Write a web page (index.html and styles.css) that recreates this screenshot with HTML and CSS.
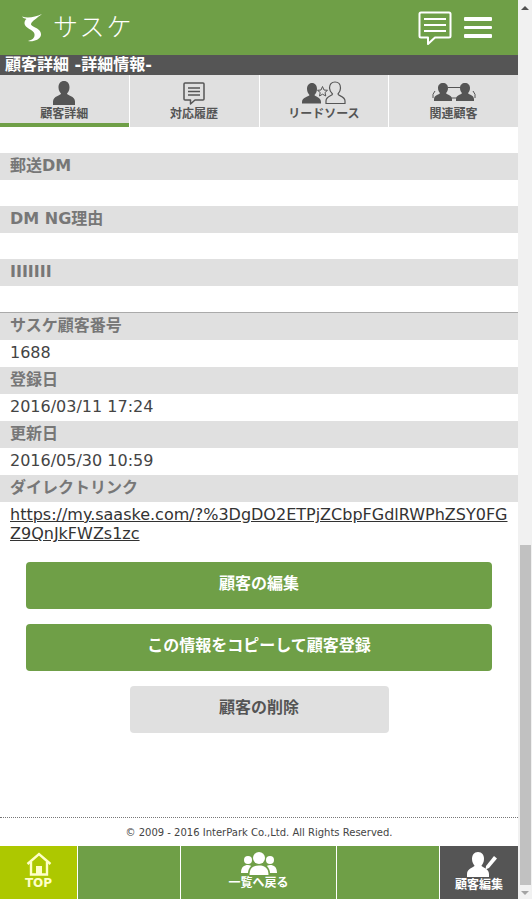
FILE: index.html
```html
<!DOCTYPE html>
<html lang="ja">
<head>
<meta charset="utf-8">
<title>サスケ</title>
<link rel="stylesheet" href="styles.css">
</head>
<body>
<div class="app">
  <div class="main">
    <header class="header">
      <div class="logo">
        <svg class="logo-mark" viewBox="0 0 22 30" width="22" height="30"><path fill="#fff" d="M1 3.5 C7 5.5 14 4 21 1 C16 5 11 8 10 11 C9.5 14 21 15 20 22 C19 27 12 29 7 28 C11 27 14 25 13.5 21 C13 17 3.500 15 3.500 10.500 C3.500 8.500 4 7 5.500 6 C4 5.500 2 5 1 3.500 Z"/></svg>
        <span class="logo-text">サスケ</span>
      </div>
      <div class="header-actions">
        <svg viewBox="0 0 34 36" width="34" height="36"><path fill="none" stroke="#fff" stroke-width="2" stroke-linejoin="round" d="M3 2.500 H31 Q32.500 2.500 32.500 4 V26 Q32.500 27.500 31 27.500 H17 L10 34 V27.500 H3 Q1.500 27.500 1.500 26 V4 Q1.500 2.500 3 2.500 Z"/><path stroke="#fff" stroke-width="2.200" d="M6 9 H28 M6 15 H28 M6 21 H28"/></svg>
        <div class="burger"><span></span><span></span><span></span></div>
      </div>
    </header>
    <h1 class="title">顧客詳細 -詳細情報-</h1>
    <nav class="tabs">
      <a class="tab tab-active">
        <svg viewBox="0 0 24 24" width="24" height="24"><use href="#person"/></svg>
        <span>顧客詳細</span>
      </a>
      <a class="tab">
        <svg viewBox="0 0 24 24" width="24" height="24"><path fill="none" stroke="#555" stroke-width="1.500" stroke-linejoin="round" d="M3 2 H21 Q22 2 22 3 V18 Q22 19 21 19 H13 L8.500 23 V19 H3 Q2 19 2 18 V3 Q2 2 3 2 Z"/><path stroke="#555" stroke-width="1.300" d="M6 7 H18 M6 10.500 H18 M6 14 H18"/></svg>
        <span>対応履歴</span>
      </a>
      <a class="tab">
        <svg viewBox="0 0 44 24" width="44" height="24"><g transform="translate(0 2)"><path fill="#555" d="M10 0 C13 0 15 2.500 15 6 C15 9 13.500 11 12.500 12 C12.500 13.500 19 14 19 19 V20.500 H0 V19 C0 14 7.500 13.500 7.500 12 C6.500 11 5 9 5 6 C5 2.500 7 0 10 0 Z"/></g><path fill="none" stroke="#555" stroke-width="1" d="M20.500 5.500 L22 9 L25.500 9.300 L23 11.500 L23.800 15 L20.500 13.200 L17.500 15 L18.200 11.500 L15.500 9.300 L19 9 Z"/><path fill="none" stroke="#555" stroke-width="1.200" d="M33 1 C36.500 1 38.500 3.500 38.500 7 C38.500 10 37 12 36 13 C36 15 43 15 43 20 V22.500 H24 V20 C24 15 30.500 15 30.500 13 C29.500 12 27.500 10 27.500 7 C27.500 3.500 29.500 1 33 1 Z"/></svg>
        <span>リードソース</span>
      </a>
      <a class="tab tab-last">
        <svg viewBox="0 0 44 24" width="44" height="24"><g fill="#555"><path d="M11 2 C14 2 16 4 16 7 C16 9.500 15 11 14 12 C14 13.500 20 14 20 18 V20 H2 V18 C2 14 8 13.500 8 12 C7 11 6 9.500 6 7 C6 4 8 2 11 2 Z"/><path d="M33 2 C36 2 38 4 38 7 C38 9.500 37 11 36 12 C36 13.500 42 14 42 18 V20 H24 V18 C24 14 30 13.500 30 12 C29 11 28 9.500 28 7 C28 4 30 2 33 2 Z"/></g><path fill="none" stroke="#555" stroke-width="1" d="M16 6.500 H28 M19 17 H25 M3 10 Q0 13 1 17 M41 10 Q44 13 43 17"/></svg>
        <span>関連顧客</span>
      </a>
    </nav>
    <main class="content">
      <dl class="fields">
        <dt class="label">郵送DM</dt><dd class="value value-empty"></dd>
        <dt class="label">DM NG理由</dt><dd class="value value-empty"></dd>
        <dt class="label">IIIIIII</dt><dd class="value value-empty"></dd>
      </dl>
      <dl class="fields fields-system">
        <dt class="label">サスケ顧客番号</dt><dd class="value">1688</dd>
        <dt class="label">登録日</dt><dd class="value">2016/03/11 17:24</dd>
        <dt class="label">更新日</dt><dd class="value">2016/05/30 10:59</dd>
        <dt class="label">ダイレクトリンク</dt>
        <dd class="value value-link"><a href="#">https://my.saaske.com/?%3DgDO2ETPjZCbpFGdlRWPhZSY0FGZ9QnJkFWZs1zc</a></dd>
      </dl>
      <div class="actions">
        <a class="btn btn-primary">顧客の編集</a>
        <a class="btn btn-primary">この情報をコピーして顧客登録</a>
        <a class="btn btn-muted">顧客の削除</a>
      </div>
    </main>
    <footer class="footer">
      <p class="copyright">© 2009 - 2016 InterPark Co.,Ltd. All Rights Reserved.</p>
      <nav class="bottom-nav">
        <a class="bn bn-top">
          <svg viewBox="0 0 26 24" width="26" height="24"><path fill="none" stroke="#ffffc8" stroke-width="2.400" d="M1.500 12 L13 2 L24.500 12"/><path fill="none" stroke="#ffffc8" stroke-width="2.400" d="M5 10 V22.500 H21 V10"/><rect x="10" y="14" width="6" height="8" fill="#ffffc8"/></svg>
          <span>TOP</span>
        </a>
        <a class="bn bn-spacer"></a>
        <a class="bn bn-list">
          <svg viewBox="0 0 36 24" width="36" height="24"><g fill="#fff"><circle cx="7" cy="8" r="4"/><path d="M0 21 C0 15 3 13 7 13 C9 13 10 14 10 14 C8 16 7 19 7 21 Z"/><circle cx="29" cy="8" r="4"/><path d="M36 21 C36 15 33 13 29 13 C27 13 26 14 26 14 C28 16 29 19 29 21 Z"/><circle cx="18" cy="6" r="6"/><path d="M8.500 23 C8.500 16 12 13.500 18 13.500 C24 13.500 27.500 16 27.500 23 Z"/></g></svg>
          <span>一覧へ戻る</span>
        </a>
        <a class="bn bn-spacer"></a>
        <a class="bn bn-edit">
          <svg viewBox="0 0 32 26" width="32" height="26"><path fill="#fff" d="M12 0 C16 0 18 3 18 7 C18 10 16.500 12.500 15.500 13.500 C15.500 15.500 23 16 23 22 V25 H1 V22 C1 16 8.500 15.500 8.500 13.500 C7.500 12.500 6 10 6 7 C6 3 8 0 12 0 Z"/><path fill="#fff" d="M20 14 L28 4 L31 6.500 L23 16 L19.500 17.500 Z"/></svg>
          <span>顧客編集</span>
        </a>
      </nav>
    </footer>
  </div>
  <aside class="scrollbar" aria-hidden="true">
    <span class="arrow arrow-up"></span>
    <div class="track"><div class="thumb"></div></div>
    <span class="arrow arrow-down"></span>
  </aside>
</div>
<svg class="defs" width="0" height="0"><defs><path id="person" fill="#555" d="M12 0 C15.500 0 17.500 2.500 17.500 6.500 C17.500 9.500 16 11.500 15 12.500 C15 14.500 23 15 23 20.500 V24 H1 V20.500 C1 15 9 14.500 9 12.500 C8 11.500 6.500 9.500 6.500 6.500 C6.500 2.500 8.500 0 12 0 Z"/></defs></svg>
</body>
</html>
```

FILE: styles.css
```css
* { box-sizing: border-box; }
html, body { margin: 0; padding: 0; height: 899px; overflow: hidden; }
body {
  font-family: "DejaVu Sans", "Noto Sans CJK JP", sans-serif;
  color: #444;
  background: #fff;
}
.defs { position: absolute; }
.app { display: flex; height: 899px; }
.main { width: 518px; display: flex; flex-direction: column; }

.header {
  height: 55px;
  background: #6f9f47;
  display: flex;
  align-items: center;
  justify-content: space-between;
  padding: 0 26px 0 21px;
  flex: none;
}
.logo { display: flex; align-items: center; gap: 10px; }
.logo-text {
  color: #fff;
  font-size: 25px;
  letter-spacing: 2px;
  font-weight: 300;
  line-height: 1;
}
.header-actions { display: flex; align-items: center; gap: 12px; }
.burger { width: 28px; display: flex; flex-direction: column; gap: 5px; }
.burger span { display: block; height: 3.500px; background: #fff; border-radius: 1px; }

.title {
  margin: 0;
  height: 20px;
  background: #555;
  color: #fff;
  font-size: 16px;
  line-height: 20px;
  font-weight: bold;
  padding-left: 5px;
  flex: none;
}
.tabs { display: flex; height: 52px; background: #e0e0e0; flex: none; }
.tab {
  flex: 1;
  display: flex;
  flex-direction: column;
  align-items: center;
  justify-content: flex-start;
  padding-top: 6px;
  border-right: 1px solid #fff;
  color: #555;
  font-size: 12px;
  font-weight: bold;
  line-height: 16px;
}
.tab span { margin-top: 1px; }
.tab svg { display: block; height: 24px; }
.tab-active { box-shadow: inset 0 -4px 0 #6f9f47; }
.tab-last { border-right: 0; }

.content { flex: 1; padding-top: 26px; min-height: 0; }
.fields { margin: 0; }
.fields-system { border-top: 1px solid #aaa; }
.label {
  height: 27px;
  background: #e0e0e0;
  color: #777;
  font-size: 16px;
  font-weight: bold;
  line-height: 25px;
  padding-left: 10px;
}
.value {
  margin: 0;
  height: 27px;
  font-size: 16px;
  line-height: 26px;
  padding-left: 10px;
  color: #444;
}
.value-empty { height: 26px; }
.value-link { height: auto; line-height: 19px; padding: 3px 0 0 10px; word-break: break-all; }
.value-link a { color: #333; }

.actions {
  display: flex;
  flex-direction: column;
  align-items: center;
  gap: 15px;
  padding-top: 19px;
}
.btn {
  display: block;
  height: 47px;
  line-height: 44px;
  text-align: center;
  font-size: 16px;
  font-weight: bold;
  border-radius: 4px;
}
.btn-primary { width: 466px; background: #6f9f47; color: #fff; }
.btn-muted { width: 259px; background: #e0e0e0; color: #555; }

.footer { flex: none; }
.copyright {
  margin: 0;
  height: 29px;
  border-top: 1px dotted #777;
  font-size: 10px;
  line-height: 30px;
  text-align: center;
  color: #444;
}
.bottom-nav { display: flex; height: 53px; background: #6f9f47; }
.bn {
  display: flex;
  flex-direction: column;
  align-items: center;
  padding-top: 6px;
  color: #fff;
  font-size: 12px;
  font-weight: bold;
  line-height: 15px;
  border-right: 1px solid #fff;
}
.bn svg { display: block; }
.bn-top { width: 78px; background: #adc800; color: #ffffc8; font-size: 12px; }
.bn-spacer { width: 103px; }
.bn-list { width: 156px; }
.bn-edit { width: 78px; background: #555; border-right: 0; }
.bn-edit svg { margin-left: 6px; }

.scrollbar {
  width: 14px;
  background: #f1f1f1;
  display: flex;
  flex-direction: column;
  align-items: center;
}
.arrow { flex: none; width: 0; height: 0; margin: 6px 0; border-left: 4px solid transparent; border-right: 4px solid transparent; }
.arrow-up { border-bottom: 4px solid #505050; }
.arrow-down { border-top: 4px solid #a3a3a3; }
.track { flex: 1; width: 100%; padding: 529px 1px 0; }
.thumb { height: 340px; margin: 0 0 0 1px; background: #c1c1c1; }
```
